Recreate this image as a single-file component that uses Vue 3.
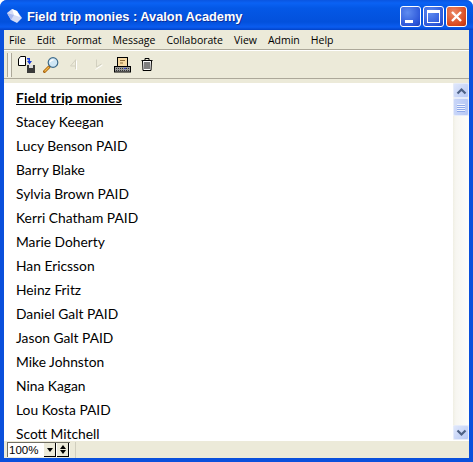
<template>
  <div class="window">
    <div class="titlebar">
      <svg class="app-icon" width="17" height="16" viewBox="0 0 17 16">
        <path d="M1 5 L6 1 L11 3 L16 10 L11 15 L5 12 Z" fill="#d5dcf6" />
        <path d="M6 1 L11 3 L14 9 L8 7 Z" fill="#ffffff" />
        <path d="M1 5 L5 12 L8 7 Z" fill="#a9b8ee" />
      </svg>
      <span class="title">Field trip monies : Avalon Academy</span>
      <div class="controls">
        <div class="ctl">
          <span class="min-bar"></span>
        </div>
        <div class="ctl">
          <span class="max-box"></span>
        </div>
        <div class="ctl close">
          <svg width="13" height="13" viewBox="0 0 13 13">
            <path d="M2 2 L11 11 M11 2 L2 11" stroke="#fff" stroke-width="2.4" fill="none" />
          </svg>
        </div>
      </div>
    </div>

    <div class="inner">
      <div class="menubar">
        <span v-for="item in menu" :key="item">{{ item }}</span>
      </div>

      <div class="toolbar">
        <span class="grip"></span>
        <svg class="tool" width="18" height="18" viewBox="0 0 18 18">
          <path d="M0.5 3 L2.5 0.5 H7.5 V9.5 H0.5 Z" fill="#fff" stroke="#000" />
          <path d="M9 2 H12 V5 H14 L11.5 8.5 L9 5 H10.5 V3.5 H9 Z" fill="#1c3fd8" />
          <rect x="9" y="9" width="8" height="8" fill="#3a3a3a" />
          <rect x="11" y="9" width="4" height="3" fill="#dcdcdc" />
        </svg>
        <svg class="tool tool-search" width="16" height="16" viewBox="0 0 16 16">
          <path d="M1.5 14.5 L6 10" stroke="#a8620c" stroke-width="3" stroke-linecap="round" />
          <path d="M1.5 14.5 L6 10" stroke="#f2b84a" stroke-width="1.2" />
          <circle cx="10" cy="5.5" r="4.8" fill="#cfe6f5" stroke="#3f6c8c" stroke-width="1.2" />
          <path d="M7 5 Q8 3 10.5 2.8" stroke="#fff" stroke-width="1.4" fill="none" />
        </svg>
        <svg class="tool tool-back" width="8" height="12" viewBox="0 0 8 12">
          <path d="M5.5 0.5 V10 M5.5 1 L0.5 7 H5" stroke="#d2d0c0" fill="none" />
          <path d="M6.5 1.5 V11" stroke="#fff" />
        </svg>
        <svg class="tool tool-next" width="8" height="12" viewBox="0 0 8 12">
          <path d="M1.5 0.5 V8 L6.5 5" stroke="#d2d0c0" fill="none" />
          <path d="M0.5 10.5 L7.5 6" stroke="#fff" />
        </svg>
        <svg class="tool tool-type" width="17" height="16" viewBox="0 0 17 16">
          <rect x="3.5" y="0.5" width="10" height="9" fill="#f6d9a2" stroke="#000" />
          <path d="M6 3.5 H11 M6 6 H9" stroke="#8a6a3a" />
          <rect x="0.5" y="9.5" width="16" height="5.5" fill="#9a9a9a" stroke="#000" />
          <path d="M2 11.5 H15 M2 13.5 H15" stroke="#333" stroke-dasharray="1 1" />
          <rect x="10" y="11" width="2" height="1" fill="#2a3fd0" />
        </svg>
        <svg class="tool tool-trash" width="12" height="13" viewBox="0 0 12 13">
          <path d="M0.5 2.5 H11.5 M4 2.5 V0.5 H8 V2.5" stroke="#000" fill="none" />
          <path d="M1.5 2.5 H10.5 L10 12.5 H2 Z" fill="#fff" stroke="#000" />
          <path d="M4 4 V11 M6 4 V11 M8 4 V11" stroke="#000" />
        </svg>
      </div>

      <div class="content">
        <div class="doc">
          <div class="line heading"><u>Field trip monies</u></div>
          <div v-for="name in names" :key="name" class="line">{{ name }}</div>
        </div>
        <div class="scrollbar">
          <div class="sbtn">
            <svg width="11" height="8" viewBox="0 0 11 8">
              <path d="M1.5 6.5 L5.5 2.5 L9.5 6.5" stroke="#4d6185" stroke-width="2.2" fill="none" />
            </svg>
          </div>
          <div class="thumb">
            <span></span><span></span><span></span><span></span>
          </div>
          <div class="track"></div>
          <div class="sbtn">
            <svg width="11" height="8" viewBox="0 0 11 8">
              <path d="M1.5 1.5 L5.5 5.5 L9.5 1.5" stroke="#4d6185" stroke-width="2.2" fill="none" />
            </svg>
          </div>
        </div>
      </div>

      <div class="statusbar">
        <div class="zoom">
          <span class="zoom-value">100%</span>
          <span class="zoom-drop"><i class="tri-down"></i></span>
          <span class="zoom-spin"><i class="tri-up"></i><i class="tri-down"></i></span>
        </div>
        <span class="status-sep"></span>
      </div>
    </div>
  </div>
</template>

<script setup>
const menu = ['File', 'Edit', 'Format', 'Message', 'Collaborate', 'View', 'Admin', 'Help']

const names = [
  'Stacey Keegan',
  'Lucy Benson PAID',
  'Barry Blake',
  'Sylvia Brown PAID',
  'Kerri Chatham PAID',
  'Marie Doherty',
  'Han Ericsson',
  'Heinz Fritz',
  'Daniel Galt PAID',
  'Jason Galt PAID',
  'Mike Johnston',
  'Nina Kagan',
  'Lou Kosta PAID',
  'Scott Mitchell',
]
</script>

<style>
html,
body {
  margin: 0;
  background: #fff;
  overflow: hidden;
}
</style>

<style scoped>
.window {
  width: 473px;
  height: 462px;
  box-sizing: border-box;
  display: flex;
  flex-direction: column;
  background: #0a50dc;
  border-radius: 7px 7px 0 0;
  overflow: hidden;
  font-family: "Open Sans", "Liberation Sans", sans-serif;
}

.titlebar {
  height: 30px;
  flex: none;
  box-sizing: border-box;
  display: flex;
  align-items: center;
  padding: 2px 6px 0 6px;
  background: linear-gradient(#0a55e0 0, #0a62f4 3px, #0458e6 8px, #0351dc 22px, #0a5cf0 27px, #0343c8 30px);
}

.app-icon {
  margin-right: 4px;
}

.title {
  color: #fff;
  font-family: "Liberation Sans", sans-serif;
  font-size: 12.8px;
  font-weight: 700;
  white-space: nowrap;
  text-shadow: 1px 1px 0 #0a2f9c;
}

.controls {
  margin-left: auto;
  display: flex;
  gap: 2px;
}

.ctl {
  width: 21px;
  height: 21px;
  box-sizing: border-box;
  border: 1px solid #fff;
  border-radius: 3px;
  background: radial-gradient(circle at 35% 30%, #5f8cf0, #2a55d8 75%, #1c3fb8);
  display: flex;
  align-items: center;
  justify-content: center;
}

.close {
  background: radial-gradient(circle at 35% 30%, #ec8a68, #d8481e 70%, #b83010);
}

.min-bar {
  width: 8px;
  height: 3px;
  background: #fff;
  align-self: flex-end;
  margin: 0 4px 3px 0;
}

.max-box {
  width: 13px;
  height: 13px;
  box-sizing: border-box;
  border: 1px solid #fff;
  border-top-width: 3px;
}

.inner {
  flex: 1;
  min-height: 0;
  margin: 0 4px 4px;
  display: flex;
  flex-direction: column;
  background: #ecead9;
}

.menubar {
  height: 19px;
  flex: none;
  display: flex;
  align-items: center;
  gap: 11px;
  padding-left: 5px;
  font-size: 10.5px;
  color: #000;
  border-bottom: 1px solid #aca899;
  box-shadow: 0 1px 0 #fff;
}

.toolbar {
  height: 27px;
  flex: none;
  display: flex;
  align-items: center;
  padding-left: 3px;
  border-bottom: 1px solid #aca899;
  margin-top: 1px;
}

.grip {
  width: 3px;
  height: 24px;
  border-left: 1px solid #aca899;
  border-right: 1px solid #aca899;
  margin-right: 6px;
  background: #f4f3ea;
}

.tool {
  flex: none;
}

.tool-search {
  margin-left: 7px;
}

.tool-back {
  margin-left: 11px;
}

.tool-next {
  margin-left: 17px;
}

.tool-type {
  margin-left: 11px;
}

.tool-trash {
  margin-left: 10px;
}

.content {
  flex: 1;
  min-height: 0;
  display: flex;
  background: #fff;
  margin-top: 4px;
}

.doc {
  flex: 1;
  overflow: hidden;
  padding: 3px 0 0 12px;
  font-family: "Lato", "Open Sans", sans-serif;
  font-size: 13.8px;
  color: #000;
}

.line {
  height: 24px;
  line-height: 24px;
  white-space: nowrap;
}

.heading {
  font-weight: 700;
  letter-spacing: 0.2px;
}

.scrollbar {
  width: 16px;
  flex: none;
  display: flex;
  flex-direction: column;
  background: #f6f5ee;
}

.sbtn {
  height: 15px;
  flex: none;
  box-sizing: border-box;
  border: 1px solid #e6ecfa;
  border-radius: 2px;
  background: linear-gradient(135deg, #dfe7fb, #b8c9f4);
  display: flex;
  align-items: center;
  justify-content: center;
}

.thumb {
  height: 18px;
  flex: none;
  box-sizing: border-box;
  border: 1px solid #e6ecfa;
  border-radius: 2px;
  background: linear-gradient(90deg, #c9d6f8, #b6c8f5);
  display: flex;
  flex-direction: column;
  align-items: center;
  justify-content: center;
  gap: 1px;
}

.thumb span {
  width: 8px;
  height: 1px;
  background: #eef3fe;
  box-shadow: 0 1px 0 #8ea8e8;
}

.track {
  flex: 1;
  background: linear-gradient(90deg, #f0efe4 0, #f7f6f1 3px, #fdfdfb 100%);
}

.statusbar {
  height: 18px;
  flex: none;
  display: flex;
  align-items: center;
  border-top: 1px solid #fff;
  box-sizing: border-box;
}

.zoom {
  display: flex;
  align-items: center;
  height: 15px;
  width: 63px;
  margin-left: 3px;
  background: #fff;
  box-sizing: border-box;
  border-top: 1px solid #716f64;
  border-left: 1px solid #716f64;
}

.zoom-value {
  font-family: "Liberation Sans", sans-serif;
  font-size: 11.5px;
  line-height: 14px;
  margin-left: 1px;
  width: 35px;
}

.zoom-drop,
.zoom-spin {
  width: 12px;
  height: 14px;
  background: #ecead9;
  border-right: 1px solid #000;
  border-bottom: 1px solid #000;
  box-sizing: border-box;
  display: flex;
  flex-direction: column;
  align-items: center;
  justify-content: center;
  gap: 1px;
}

.zoom-spin {
  margin-left: 1px;
}

.tri-down,
.tri-up {
  width: 0;
  height: 0;
  border-left: 3px solid transparent;
  border-right: 3px solid transparent;
}

.tri-down {
  border-top: 4px solid #000;
}

.tri-up {
  border-bottom: 4px solid #000;
}

.status-sep {
  width: 1px;
  height: 16px;
  background: #d0cebe;
  margin-left: 5px;
}
</style>
